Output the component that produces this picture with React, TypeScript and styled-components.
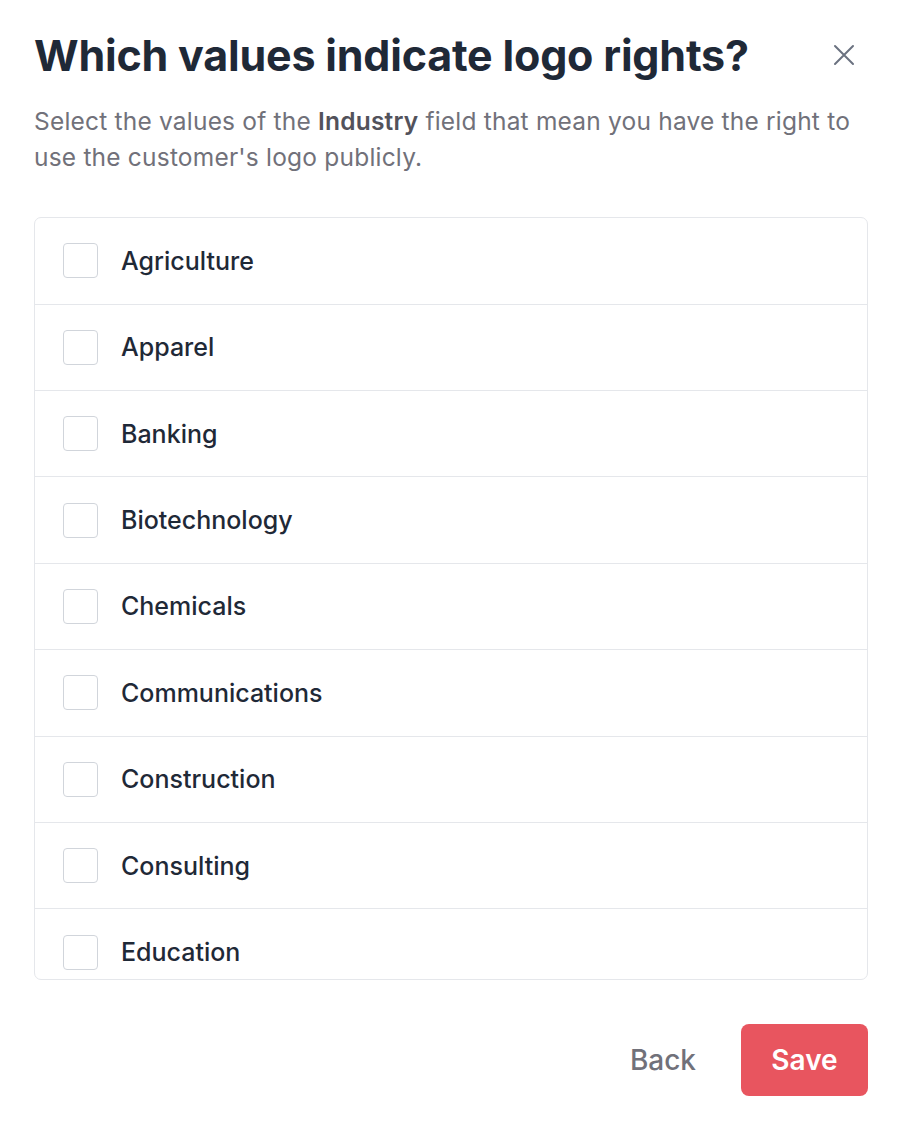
import React from "react";
import styled, { createGlobalStyle } from "styled-components";

const industries = [
  "Agriculture",
  "Apparel",
  "Banking",
  "Biotechnology",
  "Chemicals",
  "Communications",
  "Construction",
  "Consulting",
  "Education",
  "Electronics",
];

const GlobalStyle = createGlobalStyle`
  body {
    margin: 0;
    background: #ffffff;
    font-family: Inter, "Noto Sans", sans-serif;
  }
`;

const Dialog = styled.div`
  width: 900px;
  height: 1122px;
  box-sizing: border-box;
  padding: 28px 32px 0 34px;
  display: flex;
  flex-direction: column;
`;

const Header = styled.div`
  display: flex;
  align-items: center;
  justify-content: space-between;
`;

const Title = styled.h1`
  margin: 0;
  font-size: 43px;
  line-height: 54px;
  font-weight: 700;
  color: #1f2937;
  letter-spacing: -0.2px;
`;

const CloseButton = styled.button`
  border: none;
  background: none;
  padding: 0;
  margin-right: 12px;
  width: 24px;
  height: 24px;
  color: #6b7280;
  display: flex;
  align-items: center;
  justify-content: center;
`;

const Subtitle = styled.p`
  margin: 21px 0 0;
  font-size: 24.5px;
  line-height: 36px;
  letter-spacing: 0.2px;
  color: #71717a;

  b {
    font-weight: 600;
    color: #52525b;
  }
`;

const List = styled.div`
  margin-top: 42px;
  height: 763px;
  box-sizing: border-box;
  border: 1px solid #e5e7eb;
  border-radius: 7px;
  overflow: hidden;
`;

const Row = styled.label`
  display: flex;
  align-items: center;
  gap: 23px;
  height: 86.4px;
  box-sizing: border-box;
  padding-left: 28px;
  border-top: 1px solid #e5e7eb;

  &:first-child {
    border-top: none;
    height: 85.6px;
  }
`;

const Box = styled.span`
  width: 35px;
  height: 35px;
  box-sizing: border-box;
  border: 1px solid #d1d5db;
  border-radius: 4px;
  background: #fff;
`;

const RowText = styled.span`
  font-size: 25px;
  font-weight: 500;
  color: #1f2937;
`;

const Footer = styled.div`
  margin-top: 44px;
  display: flex;
  justify-content: flex-end;
  align-items: center;
  gap: 45px;
`;

const TextButton = styled.button`
  border: none;
  background: none;
  padding: 0;
  font-family: inherit;
  font-size: 28px;
  font-weight: 500;
  color: #71717a;
`;

const SaveButton = styled.button`
  width: 127px;
  height: 72px;
  border: none;
  border-radius: 8px;
  background: #e8555f;
  color: #ffffff;
  font-family: inherit;
  font-size: 28px;
  font-weight: 600;
`;

export default function App() {
  return (
    <>
      <GlobalStyle />
      <Dialog>
        <Header>
          <Title>Which values indicate logo rights?</Title>
          <CloseButton aria-label="Close">
            <svg width="22" height="22" viewBox="0 0 22 22" fill="none" stroke="currentColor" strokeWidth="2" strokeLinecap="round">
              <path d="M2 2L20 20M20 2L2 20" />
            </svg>
          </CloseButton>
        </Header>
        <Subtitle>
          Select the values of the <b>Industry</b> field that mean you have the right to use the customer's logo publicly.
        </Subtitle>
        <List>
          {industries.map((name) => (
            <Row key={name}>
              <Box />
              <RowText>{name}</RowText>
            </Row>
          ))}
        </List>
        <Footer>
          <TextButton>Back</TextButton>
          <SaveButton>Save</SaveButton>
        </Footer>
      </Dialog>
    </>
  );
}
